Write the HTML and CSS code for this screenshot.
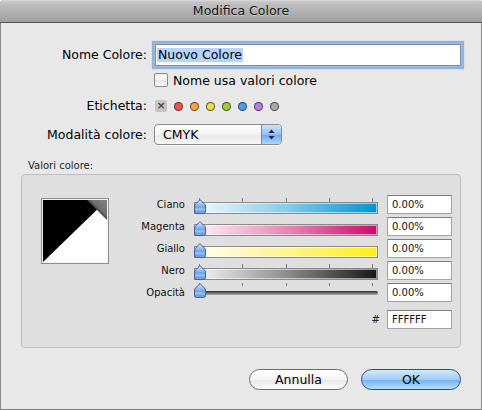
FILE: index.html
```html
<!DOCTYPE html>
<html lang="it">
<head>
<meta charset="utf-8">
<title>Modifica Colore</title>
<link rel="stylesheet" href="styles.css">
</head>
<body>
<div class="window">
  <div class="titlebar">Modifica Colore</div>
  <div class="content">
    <div class="form">
      <div class="lbl">Nome Colore:</div>
      <div class="ctl"><div class="textfield"><span class="sel">Nuovo Colore</span></div></div>

      <div class="lbl"></div>
      <div class="ctl check-row"><span class="checkbox"></span><span class="cbtext">Nome usa valori colore</span></div>

      <div class="lbl">Etichetta:</div>
      <div class="ctl tags">
        <span class="tag-x">×</span>
        <span class="dot red"></span>
        <span class="dot orange"></span>
        <span class="dot yellow"></span>
        <span class="dot green"></span>
        <span class="dot blue"></span>
        <span class="dot purple"></span>
        <span class="dot gray"></span>
      </div>

      <div class="lbl">Modalità colore:</div>
      <div class="ctl">
        <div class="popup">
          <span class="popup-text">CMYK</span>
          <span class="popup-arrows">
            <svg width="7" height="11" viewBox="0 0 7 11"><path d="M3.5 0.5 L6.5 4 L0.5 4 Z" fill="#1b2a48"/><path d="M3.5 10.5 L6.5 7 L0.5 7 Z" fill="#1b2a48"/></svg>
          </span>
        </div>
      </div>
    </div>

    <div class="group-title">Valori colore:</div>
    <div class="group">
      <div class="swatch">
        <svg width="64" height="62" viewBox="0 0 64 62">
          <defs>
            <linearGradient id="corner" gradientUnits="userSpaceOnUse" x1="53" y1="11" x2="62" y2="2">
              <stop offset="0" stop-color="#2e2e2e"/>
              <stop offset="0.35" stop-color="#6e6e6e"/>
              <stop offset="1" stop-color="#7e7e7e"/>
            </linearGradient>
          </defs>
          <rect x="0" y="0" width="64" height="62" fill="#ffffff"/>
          <path d="M0 0 L64 0 L0 62 Z" fill="#000000"/>
          <path d="M44 0 L64 0 L64 20 Z" fill="url(#corner)"/>
        </svg>
      </div>
      <div class="sliders">
        <div class="slbl">Ciano</div>
        <div class="slider">
          <div class="ticks"><i></i><i></i><i></i><i></i><i></i></div>
          <div class="track cyan"></div>
          <svg class="thumb" width="12" height="15" viewBox="0 0 12 15"><use href="#thumbshape"/></svg>
        </div>
        <div class="field">0.00%</div>

        <div class="slbl">Magenta</div>
        <div class="slider">
          <div class="ticks hidden"><i></i><i></i><i></i><i></i><i></i></div>
          <div class="track magenta"></div>
          <svg class="thumb" width="12" height="15" viewBox="0 0 12 15"><use href="#thumbshape"/></svg>
        </div>
        <div class="field">0.00%</div>

        <div class="slbl">Giallo</div>
        <div class="slider">
          <div class="ticks hidden"><i></i><i></i><i></i><i></i><i></i></div>
          <div class="track yellow"></div>
          <svg class="thumb" width="12" height="15" viewBox="0 0 12 15"><use href="#thumbshape"/></svg>
        </div>
        <div class="field">0.00%</div>

        <div class="slbl">Nero</div>
        <div class="slider">
          <div class="ticks"><i></i><i></i><i></i><i></i><i></i></div>
          <div class="track black"></div>
          <svg class="thumb" width="12" height="15" viewBox="0 0 12 15"><use href="#thumbshape"/></svg>
        </div>
        <div class="field">0.00%</div>

        <div class="slbl">Opacità</div>
        <div class="slider opacity">
          <div class="ticks small"><i></i><i></i><i></i><i></i><i></i></div>
          <div class="opline"></div>
          <svg class="thumb" width="12" height="15" viewBox="0 0 12 15"><use href="#thumbshape"/></svg>
        </div>
        <div class="field">0.00%</div>

        <div class="slbl"></div>
        <div class="hash">#</div>
        <div class="field hex">FFFFFF</div>
      </div>
    </div>

    <div class="buttons">
      <div class="btn cancel">Annulla</div>
      <div class="btn ok">OK</div>
    </div>
  </div>
</div>

<svg width="0" height="0" class="defs">
  <defs>
    <linearGradient id="thumbfill" x1="0" y1="0" x2="0" y2="1">
      <stop offset="0" stop-color="#d6e7fb"/>
      <stop offset="0.4" stop-color="#8fbbf0"/>
      <stop offset="0.55" stop-color="#6ea3e8"/>
      <stop offset="0.7" stop-color="#9cc6f4"/>
      <stop offset="0.85" stop-color="#6d9fe3"/>
      <stop offset="1" stop-color="#8ab8ef"/>
    </linearGradient>
    <g id="thumbshape">
      <path d="M6 0.6 L11.4 6 L11.4 12.8 Q11.4 14.4 9.8 14.4 L2.2 14.4 Q0.6 14.4 0.6 12.8 L0.6 6 Z" fill="url(#thumbfill)" stroke="#3d5c9c" stroke-width="1"/>
    </g>
  </defs>
</svg>
</body>
</html>
```

FILE: styles.css
```css
* { box-sizing: border-box; }

html, body {
  margin: 0;
  padding: 0;
}

body {
  width: 482px;
  height: 410px;
  overflow: hidden;
  background: #ffffff;
  font-family: "Lucida Grande", "DejaVu Sans", sans-serif;
  color: #000;
}

.defs {
  position: absolute;
  width: 0;
  height: 0;
}

.window {
  width: 482px;
  height: 410px;
  background: #e8e8e8;
  border-radius: 4px 4px 0 0;
  overflow: hidden;
  box-shadow: inset 1px 0 0 #8a8a8a, inset -1px 0 0 #8a8a8a, inset 0 -1px 0 #7a7a7a;
  display: flex;
  flex-direction: column;
}

.titlebar {
  height: 23px;
  line-height: 22px;
  text-align: center;
  font-size: 12.5px;
  color: #151515;
  background: linear-gradient(#dcdcdc 0, #c4c4c4 2px, #b2b2b2 50%, #9e9e9e 100%);
  border-bottom: 1px solid #525252;
  text-shadow: 0 1px 0 rgba(255,255,255,0.35);
}

.content {
  padding-top: 21px;
  display: flex;
  flex-direction: column;
}

.form {
  display: grid;
  grid-template-columns: 147px 307px;
  grid-template-rows: 22px 28px 24px 33px;
  column-gap: 7px;
  align-items: center;
}

.lbl {
  text-align: right;
  font-size: 12.5px;
  line-height: 16px;
}

.ctl {
  display: flex;
  align-items: center;
  height: 100%;
}

.textfield {
  margin-left: 1px;
  width: 306px;
  height: 22px;
  background: #fff;
  border: 1px solid #7f8b9c;
  box-shadow: 0 0 0 1px #9fbde6, 0 0 1px 3px rgba(116,160,220,0.75);
  padding: 3px 1px;
  font-size: 12.5px;
  line-height: 14px;
  display: flex;
  align-items: center;
}

.sel {
  background: #b5d5ff;
  line-height: 14px;
  padding: 0 1px;
}

.checkbox {
  width: 14px;
  height: 14px;
  border: 1px solid #8a8a8a;
  border-radius: 2px;
  background: linear-gradient(#ffffff, #f1f1f1 50%, #e4e4e4 51%, #fbfbfb);
  box-shadow: inset 0 1px 1px rgba(0,0,0,0.08);
}

.cbtext {
  margin-left: 5px;
  font-size: 12.5px;
}

.tags {
  gap: 7px;
}

.tag-x {
  margin-left: 1px;
  width: 12px;
  height: 12px;
  border-radius: 2px;
  background: #c6c6c6;
  color: #4a4a4a;
  font-size: 11px;
  font-weight: bold;
  line-height: 12px;
  text-align: center;
}

.dot {
  width: 9px;
  height: 9px;
  border-radius: 50%;
  border: 1px solid rgba(40,40,40,0.75);
}
.dot.red { background: #f2514d; }
.dot.orange { background: #f6a43b; }
.dot.yellow { background: #e8e03c; }
.dot.green { background: #9fcd3c; }
.dot.blue { background: #4c9ceb; }
.dot.purple { background: #b97fdb; }
.dot.gray { background: #a8a8a8; }

.popup {
  width: 128px;
  height: 21px;
  border: 1px solid #8c8c8c;
  border-radius: 4px;
  background: linear-gradient(#ffffff, #f3f3f3 50%, #e7e7e7 51%, #f7f7f7);
  display: flex;
  align-items: stretch;
  overflow: hidden;
  box-shadow: 0 1px 0 rgba(255,255,255,0.6);
}

.popup-text {
  flex: 1;
  padding-left: 8px;
  font-size: 12.5px;
  line-height: 19px;
}

.popup-arrows {
  width: 20px;
  border-left: 1px solid #6f86b3;
  background: linear-gradient(#cfe3fa, #93c0f1 50%, #6aa9ec 51%, #aed6fb);
  display: flex;
  align-items: center;
  justify-content: center;
}

.group-title {
  margin-top: 8px;
  padding-left: 28px;
  font-size: 10px;
  line-height: 14px;
  color: #262626;
}

.group {
  margin: 1px 21px 0 21px;
  height: 174px;
  border: 1px solid #bdbdbd;
  border-radius: 4px;
  background: #dfdfdf;
  display: flex;
  padding-left: 19px;
}

.swatch {
  margin-top: 23px;
  width: 68px;
  height: 66px;
  border: 1px solid #8e8e8e;
  padding: 1px;
  background: #f2f2f2;
}

.swatch svg {
  display: block;
}

.sliders {
  margin-top: 20px;
  display: grid;
  grid-template-columns: 76px 184px 65px;
  grid-template-rows: repeat(5, 22px) 24px;
  column-gap: 9px;
  align-items: start;
}

.slbl {
  text-align: right;
  font-size: 10px;
  line-height: 19px;
  color: #111;
}

.slider {
  position: relative;
  padding-top: 3px;
  height: 19px;
}

.ticks {
  height: 4px;
  display: flex;
  justify-content: space-between;
  padding: 0 5px;
}

.ticks i {
  width: 1px;
  background: #7b7b7b;
}

.ticks.hidden i {
  background: transparent;
}

.track {
  height: 12px;
  border: 1px solid #8a8a8a;
  box-shadow: inset 0 0 0 1px rgba(255,255,255,0.55);
}

.track.cyan { background: linear-gradient(to right, #f2fafe, #89cbe8 50%, #0094d4); }
.track.magenta { background: linear-gradient(to right, #fef2f7, #e58bb4 50%, #cb0a6c); }
.track.yellow { background: linear-gradient(to right, #fffdf0, #fff590 50%, #ffee1a); }
.track.black { background: linear-gradient(to right, #f7f7f7, #8e8e8e 50%, #161616); }

.slider.opacity {
  padding-top: 0;
  height: 15px;
}

.ticks.small {
  height: 3px;
}

.opline {
  margin-top: 5px;
  height: 4px;
  border-radius: 0 2px 2px 0;
  background: linear-gradient(#2e2e2e, #6a6a6a 50%, #b0b0b0);
}

.thumb {
  position: absolute;
  left: 0;
  bottom: 0;
  display: block;
}

.field {
  height: 19px;
  background: #fff;
  border: 1px solid #a3a3a3;
  border-top-color: #7e7e7e;
  font-size: 10px;
  line-height: 17px;
  padding-left: 4px;
  color: #111;
}

.field.hex {
  align-self: end;
}

.hash {
  align-self: end;
  text-align: right;
  font-size: 10px;
  line-height: 19px;
  padding-right: 0;
  margin-right: -2px;
  color: #222;
}

.buttons {
  margin-top: 21px;
  padding-right: 21px;
  display: flex;
  justify-content: flex-end;
  gap: 13px;
}

.btn {
  height: 21px;
  border-radius: 11px;
  font-size: 12.5px;
  line-height: 19px;
  text-align: center;
}

.btn.cancel {
  width: 99px;
  border: 1px solid #6b6b6b;
  background: linear-gradient(#ffffff, #f4f4f4 50%, #e6e6e6 51%, #fbfbfb);
}

.btn.ok {
  width: 100px;
  border: 1px solid #2f4a84;
  background: linear-gradient(#d4e8fc, #a2ccf5 50%, #71b2f0 51%, #b8defd);
}
```
